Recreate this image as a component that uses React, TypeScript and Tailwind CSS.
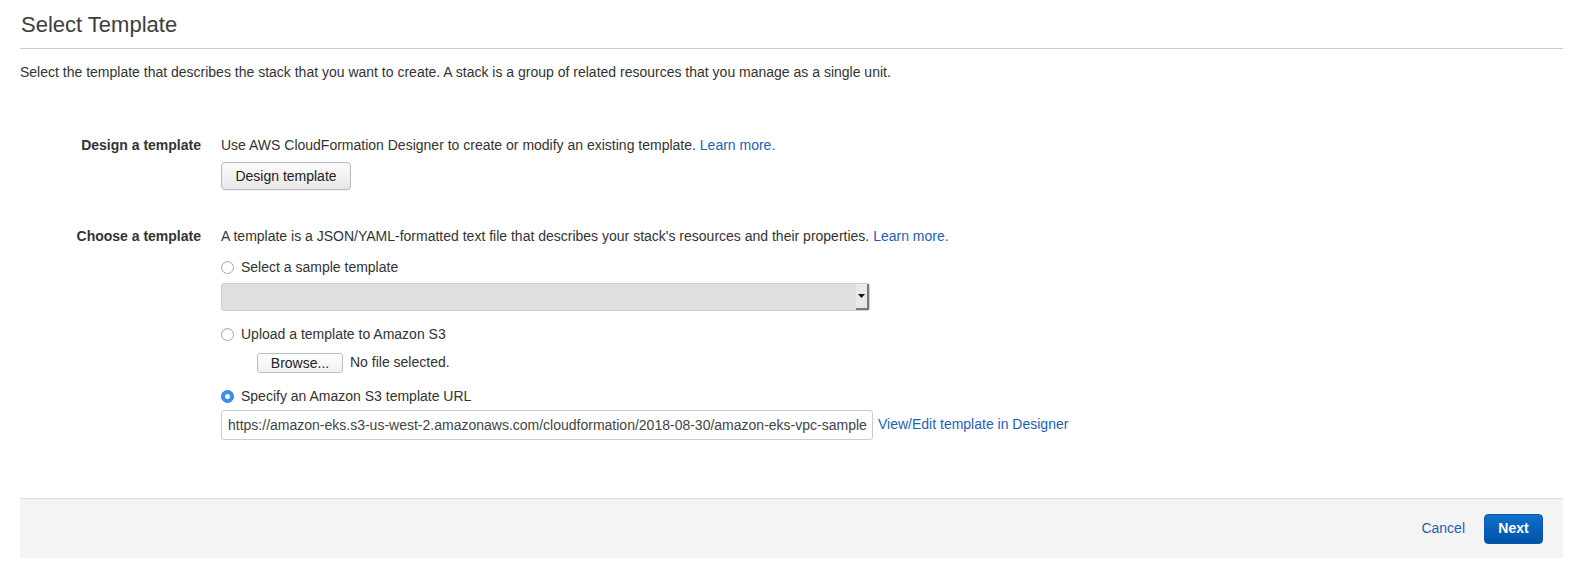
import * as React from "react";

const FONT = { fontFamily: '"Liberation Sans", Arial, Helvetica, sans-serif' };

function Radio({ checked = false }: { checked?: boolean }) {
  if (checked) {
    return (
      <span className="w-[13px] h-[13px] rounded-full bg-[#3a8ef5] border border-[#2f7fe6] flex items-center justify-center shrink-0">
        <span className="w-[5px] h-[5px] rounded-full bg-white" />
      </span>
    );
  }
  return (
    <span className="w-[13px] h-[13px] rounded-full bg-white border border-[#a9a9a9] shadow-[inset_0_1px_1px_rgba(0,0,0,0.08)] shrink-0" />
  );
}

function Row({ label, children }: { label: string; children: React.ReactNode }) {
  return (
    <div className="flex">
      <div className="w-[181px] shrink-0 text-right font-bold text-[14px] leading-[20px] text-[#333]">{label}</div>
      <div className="pl-[20px] flex flex-col">{children}</div>
    </div>
  );
}

export default function App() {
  return (
    <div className="w-[1579px] h-[581px] bg-white text-[#333]" style={FONT}>
      <div className="pl-[20px] pr-[16px]">
        {/* HEADER */}
        <div className="pt-[11px] pb-[10px] border-b border-[#cccccc]">
          <h2 className="text-[22px] leading-[27px] text-[#3d3d3d] pl-[1px]">Select Template</h2>
        </div>
        <p className="mt-[13px] text-[14px] leading-[20px]">
          Select the template that describes the stack that you want to create. A stack is a group of related
          resources that you manage as a single unit.
        </p>

        {/* DESIGN A TEMPLATE */}
        <div className="mt-[53px]">
          <Row label="Design a template">
            <div className="text-[14px] leading-[20px]">
              Use AWS CloudFormation Designer to create or modify an existing template.{" "}
              <span className="text-[#1e5fb5]">Learn more.</span>
            </div>
            <button className="mt-[7px] w-[130px] h-[28px] rounded-[4px] border border-[#b9b9b9] bg-gradient-to-b from-[#fbfbfb] to-[#e8e8e8] text-[14px] text-[#222] shadow-[0_1px_0_rgba(0,0,0,0.05)]">
              Design template
            </button>
          </Row>
        </div>

        {/* CHOOSE A TEMPLATE */}
        <div className="mt-[36px]">
          <Row label="Choose a template">
            <div className="text-[14px] leading-[20px]">
              A template is a JSON/YAML-formatted text file that describes your stack's resources and their properties.{" "}
              <span className="text-[#1e5fb5]">Learn more.</span>
            </div>

            <label className="mt-[11px] flex items-center gap-[7px] text-[14px] leading-[20px]">
              <Radio />
              Select a sample template
            </label>
            <div className="mt-[6px] w-[649px] h-[28px] flex rounded-[3px] border border-[#cfcfcf] bg-[#dfdfdf]">
              <div className="flex-1" />
              <div className="w-[13px] flex items-center justify-center bg-[#e9e9e9] border-r-2 border-b-2 border-[#7a7a7a]">
                <svg width="7" height="5" viewBox="0 0 7 5">
                  <path d="M0 0 L7 0 L3.5 4 Z" fill="#111" />
                </svg>
              </div>
            </div>

            <label className="mt-[13px] flex items-center gap-[7px] text-[14px] leading-[20px]">
              <Radio />
              Upload a template to Amazon S3
            </label>
            <div className="mt-[8px] pl-[36px] flex items-center gap-[7px] text-[14px]">
              <button className="w-[86px] h-[20px] rounded-[3px] border border-[#bdbdbd] bg-gradient-to-b from-white to-[#f0f0f0] text-[14px] leading-[18px] text-[#222]">
                Browse...
              </button>
              <span>No file selected.</span>
            </div>

            <label className="mt-[13px] flex items-center gap-[7px] text-[14px] leading-[20px]">
              <Radio checked />
              Specify an Amazon S3 template URL
            </label>
            <div className="mt-[4px] flex items-center">
              <input
                readOnly
                value="https://amazon-eks.s3-us-west-2.amazonaws.com/cloudformation/2018-08-30/amazon-eks-vpc-sample.yaml"
                className="w-[652px] h-[30px] rounded-[3px] border border-[#cccccc] bg-white pl-[6px] pr-[4px] text-[14px] text-[#444] outline-none"
                style={FONT}
              />
              <span className="ml-[5px] text-[14px] text-[#1e5fb5] -mt-[2px]">View/Edit template in Designer</span>
            </div>
          </Row>
        </div>

        {/* FOOTER */}
        <div className="mt-[58px] h-[60px] bg-[#f4f4f4] border-t border-[#dddddd] flex items-center justify-end pr-[20px]">
          <span className="text-[14px] text-[#1e5fb5] mr-[19px]">Cancel</span>
          <button className="w-[59px] h-[30px] rounded-[4px] bg-gradient-to-b from-[#116fcb] to-[#0053a8] border border-[#0a58a8] text-white font-bold text-[14px]">
            Next
          </button>
        </div>
      </div>
    </div>
  );
}
